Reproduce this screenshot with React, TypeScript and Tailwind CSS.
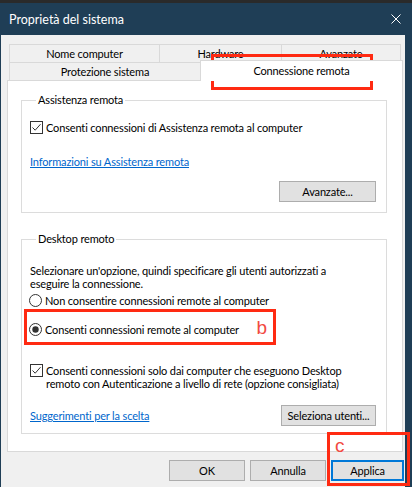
import React from "react";

function CheckBox() {
  return (
    <svg width="13" height="13" viewBox="0 0 13 13" className="shrink-0">
      <rect x="0.5" y="0.5" width="12" height="12" fill="white" stroke="#333333" />
      <path d="M2.5 6.5 L5.2 9.2 L10.5 3.2" fill="none" stroke="#333333" strokeWidth="1" />
    </svg>
  );
}

function Radio({ checked }: { checked?: boolean }) {
  return (
    <svg width="13" height="13" viewBox="0 0 13 13" className="shrink-0">
      <circle cx="6.5" cy="6.5" r="6" fill="white" stroke="#333333" />
      {checked && <circle cx="6.5" cy="6.5" r="3.2" fill="#333333" />}
    </svg>
  );
}

function Btn({ children, w, primary }: { children: React.ReactNode; w: string; primary?: boolean }) {
  return (
    <div
      className={`${w} flex h-[21px] items-center justify-center ${
        primary ? "border-2 border-[#0078d7]" : "border border-[#adadad]"
      } bg-[#e1e1e1]`}
    >
      {children}
    </div>
  );
}

export default function App() {
  return (
    <div className="relative h-[487px] w-[412px] overflow-hidden bg-[#1f3e56] font-[Lato,sans-serif] text-[11px] leading-[13px] tracking-[-0.15px] text-black">
      <div className="h-[3px] bg-[#2a2a2a]" />
      <div className="flex h-[32px] items-center justify-between pl-[9px] pr-[11px]">
        <span className="text-[12.5px] tracking-normal text-white">Proprietà del sistema</span>
        <svg width="10" height="10" viewBox="0 0 10 10">
          <path d="M0.5 0.5L9.5 9.5M9.5 0.5L0.5 9.5" stroke="white" strokeWidth="1" />
        </svg>
      </div>

      <div className="ml-[1px] h-[452px] w-[404px] bg-[#f0f0f0] pt-[9px]">
        {/* back row of tabs */}
        <div className="ml-[8px] flex h-[18px]">
          <div className="flex w-[150px] items-center justify-center border-l border-t border-[#d9d9d9]">Nome computer</div>
          <div className="flex w-[122px] items-center justify-center border-l border-t border-[#d9d9d9]">Hardware</div>
          <div className="flex w-[120px] items-center justify-center border-l border-r border-t border-[#d9d9d9]">Avanzate</div>
        </div>
        {/* front row of tabs */}
        <div className="ml-[8px] flex h-[18px] items-start">
          <div className="flex h-[18px] w-[191px] items-center justify-center border-l border-t border-[#d9d9d9]">
            Protezione sistema
          </div>
          <div className="relative z-10 -mt-[2px] flex h-[21px] w-[203px] items-center justify-center border-l border-r border-t border-[#d9d9d9] bg-white pb-[1px]">
            Connessione remota
          </div>
        </div>

        {/* panel */}
        <div className="ml-[6px] h-[372px] w-[396px] border border-[#d9d9d9] bg-white">
          <fieldset className="ml-[13px] mt-[13px] w-[366px] border border-[#dcdcdc] pb-[10px] pl-[8px] pr-[10px]">
            <legend className="ml-[6px] px-[2px] leading-[12px]">Assistenza remota</legend>
            <div className="mt-[15px] flex h-[13px] items-center gap-[3px]">
              <CheckBox />
              <span>Consenti connessioni di Assistenza remota al computer</span>
            </div>
            <div className="mt-[21px] h-[13px] text-[#0066cc] underline">Informazioni su Assistenza remota</div>
            <div className="mt-[13px] flex justify-end">
              <Btn w="w-[97px]">Avanzate...</Btn>
            </div>
          </fieldset>

          <fieldset className="ml-[13px] mt-[20px] w-[366px] border border-[#dcdcdc] pb-[7px] pl-[8px] pr-[10px]">
            <legend className="ml-[6px] px-[2px] leading-[12px]">Desktop remoto</legend>
            <p className="mt-[19px]">
              Selezionare un'opzione, quindi specificare gli utenti autorizzati a
              <br />
              eseguire la connessione.
            </p>
            <div className="-ml-[1px] mt-[4px] flex h-[13px] items-center gap-[3px]">
              <Radio />
              <span>Non consentire connessioni remote al computer</span>
            </div>
            <div className="-ml-[1px] mt-[16px] flex h-[13px] items-center gap-[3px]">
              <Radio checked />
              <span>Consenti connessioni remote al computer</span>
            </div>
            <div className="mt-[28px] flex items-start gap-[3px]">
              <CheckBox />
              <span>
                Consenti connessioni solo dai computer che eseguono Desktop
                <br />
                remoto con Autenticazione a livello di rete (opzione consigliata)
              </span>
            </div>
            <div className="mt-[15px] flex items-center justify-between">
              <span className="text-[#0066cc] underline">Suggerimenti per la scelta</span>
              <Btn w="w-[95px]">Seleziona utenti...</Btn>
            </div>
          </fieldset>
        </div>

        {/* bottom buttons */}
        <div className="ml-[168px] mt-[8px] flex gap-[5px]">
          <Btn w="w-[76px]">OK</Btn>
          <Btn w="w-[76px]">Annulla</Btn>
          <Btn w="w-[73px]" primary>
            Applica
          </Btn>
        </div>
      </div>

      {/* annotations */}
      <div className="absolute left-[211px] top-[54px] flex h-[36px] w-[162px] items-center border-[3px] border-[#ff2a12] pl-[11px]">
        <span className="font-['Liberation_Sans',sans-serif] text-[19px] leading-none tracking-normal text-[#f24a42]">a</span>
      </div>
      <div className="absolute left-[24px] top-[309px] flex h-[36px] w-[252px] items-center justify-end border-[3px] border-[#ff2a12] pr-[6px]">
        <span className="font-['Liberation_Sans',sans-serif] text-[19px] leading-none tracking-normal text-[#f24a42]">b</span>
      </div>
      <div className="absolute left-[327px] top-[432px] h-[54px] w-[83px] border-[3px] border-[#ff2a12] pl-[5px] pt-[1px]">
        <span className="font-['Liberation_Sans',sans-serif] text-[19px] leading-none tracking-normal text-[#f24a42]">c</span>
      </div>
    </div>
  );
}
